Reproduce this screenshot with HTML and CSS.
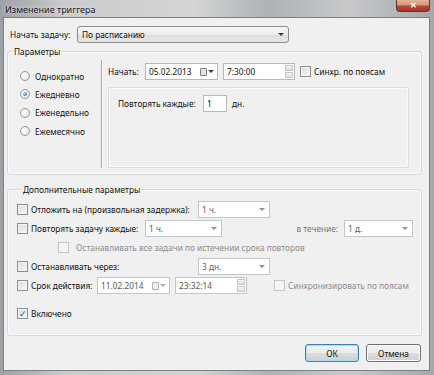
FILE: index.html
```html
<!DOCTYPE html>
<html lang="ru">
<head>
  <meta charset="UTF-8">
  <title>Изменение триггера</title>
  <link rel="stylesheet" href="styles.css">
</head>
<body>
  <div class="window">
    <div class="titlebar">
      <span class="title">Изменение триггера</span>
      <div class="close">✕</div>
    </div>

    <div class="dialog">
      <!-- начать задачу -->
      <div class="start-row">
        <span class="lbl-start">Начать задачу:</span>
        <div class="combo">По расписанию<span class="arrow"></span></div>
      </div>

      <!-- параметры -->
      <fieldset class="group params">
        <legend>Параметры</legend>
        <div class="radios">
          <div class="radio-row"><span class="radio"></span>Однократно</div>
          <div class="radio-row"><span class="radio checked"></span>Ежедневно</div>
          <div class="radio-row"><span class="radio"></span>Еженедельно</div>
          <div class="radio-row"><span class="radio"></span>Ежемесячно</div>
        </div>
        <div class="vsep"></div>
        <div class="schedule">
          <div class="field-row start-line">
            <span class="lbl-begin">Начать:</span>
            <div class="field date">05.02.2013<span class="cal"></span><span class="arrow"></span></div>
            <div class="field time">7:30:00<span class="spin"><i></i><i></i></span></div>
            <span class="check sync"></span><span>Синхр. по поясам</span>
          </div>
          <div class="inner">
            <div class="field-row">
              <span class="lbl-every">Повторять каждые:</span>
              <div class="field num">1</div>
              <span class="unit">дн.</span>
            </div>
          </div>
        </div>
      </fieldset>

      <!-- дополнительные параметры -->
      <fieldset class="group extra">
        <legend>Дополнительные параметры</legend>
        <div class="field-row">
          <span class="check"></span>
          <span class="lbl-long">Отложить на (произвольная задержка):</span>
          <div class="field drop w72">1 ч.<span class="arrow"></span></div>
        </div>
        <div class="field-row">
          <span class="check"></span>
          <span class="lbl-repeat">Повторять задачу каждые:</span>
          <div class="field drop w77">1 ч.<span class="arrow"></span></div>
          <span class="lbl-during">в течение:</span>
          <div class="field drop w69">1 д.<span class="arrow"></span></div>
        </div>
        <div class="field-row sub muted">
          <span class="check disabled"></span>
          <span>Останавливать все задачи по истечении срока повторов</span>
        </div>
        <div class="field-row">
          <span class="check"></span>
          <span class="lbl-long">Останавливать через:</span>
          <div class="field drop w72">3 дн.<span class="arrow"></span></div>
        </div>
        <div class="field-row">
          <span class="check"></span>
          <span class="lbl-expire">Срок действия:</span>
          <div class="field date off">11.02.2014<span class="cal"></span><span class="arrow"></span></div>
          <div class="field time off">23:32:14<span class="spin"><i></i><i></i></span></div>
          <span class="check disabled sync2"></span><span class="muted">Синхронизировать по поясам</span>
        </div>
        <div class="field-row enabled-row">
          <span class="check checked">✓</span>
          <span>Включено</span>
        </div>
      </fieldset>

      <div class="buttons">
        <button class="btn default">ОК</button>
        <button class="btn">Отмена</button>
      </div>
    </div>
  </div>
</body>
</html>
```

FILE: styles.css
```css
* {
  margin: 0;
  padding: 0;
  box-sizing: border-box;
}
body {
  font-family: 'Noto Sans', 'Open Sans', sans-serif;
  font-size: 8.3px;
  color: #111;
  background: #8e9297;
  white-space: nowrap;
}
.window {
  width: 434px;
  height: 375px;
  display: flex;
  flex-direction: column;
  background: linear-gradient(to right, #9da1a5, #c9cbcd 15%, #d3d5d6 45%, #aeb2b5 62%, #c7c9cb 80%, #a4a8ac);
}
.titlebar {
  height: 17px;
  display: flex;
  align-items: flex-start;
  padding-left: 5px;
}
.title {
  margin-top: 3px;
  font-size: 9px;
  color: #1e2024;
  text-shadow: 0 0 4px rgba(255,255,255,0.8);
}
.close {
  margin-left: auto;
  margin-right: 4px;
  width: 34px;
  height: 12px;
  border: 1px solid #6a3129;
  border-top: none;
  border-radius: 0 0 4px 4px;
  background: linear-gradient(#e2b595, #d2967a 45%, #b8463a 55%, #a8342a);
  color: #fff;
  font-size: 8px;
  font-weight: bold;
  text-align: center;
  line-height: 10px;
}
.dialog {
  flex: 1;
  margin: 0 4px 4px 3px;
  border: 1px solid #7b8085;
  background: #f0f0f0;
  padding: 8px 7px 0 3px;
  display: flex;
  flex-direction: column;
}

/* первая строка */
.start-row {
  display: flex;
  align-items: center;
  padding-left: 3px;
}
.lbl-start { width: 67px; }
.combo {
  width: 212px;
  height: 17px;
  border: 1px solid #8a8c8e;
  border-radius: 3px;
  background: linear-gradient(#f7f7f7, #ebebeb 50%, #dedede 51%, #e6e6e6);
  display: flex;
  align-items: center;
  padding-left: 4px;
}
.arrow {
  margin-left: auto;
  margin-right: 4px;
  width: 0;
  height: 0;
  border-left: 3px solid transparent;
  border-right: 3px solid transparent;
  border-top: 3px solid #3d3d3d;
}

/* группы */
.group {
  border: 1px solid #d5dadf;
  border-radius: 3px;
  box-shadow: inset 0 0 0 1px #fbfbfb;
}
.group legend {
  margin-left: 5px;
  padding: 0 1px;
}
.params {
  margin-top: 3px;
  display: flex;
  padding-bottom: 6px;
}
.radios {
  width: 93px;
  padding: 10px 0 0 12px;
}
.radio-row {
  height: 18.3px;
  display: flex;
  align-items: center;
}
.radio {
  width: 10px;
  height: 10px;
  border: 1px solid #9a9a9a;
  border-radius: 50%;
  background: radial-gradient(circle at 40% 40%, #ffffff, #dcdcdc);
  margin-right: 5px;
  display: flex;
  align-items: center;
  justify-content: center;
}
.radio.checked::after {
  content: '';
  width: 4px;
  height: 4px;
  border-radius: 50%;
  background: radial-gradient(circle at 35% 35%, #9fd0f5, #2b62a8);
}
.vsep {
  width: 2px;
  margin-top: 3px;
  border-left: 1px solid #a9a9a9;
  border-right: 1px solid #ffffff;
}
.schedule {
  flex: 1;
  padding: 6px 12px 0 5px;
}
.field-row {
  display: flex;
  align-items: center;
  height: 17px;
}
.lbl-begin { width: 37px; }
.field {
  height: 17px;
  border: 1px solid #b5b9be;
  background: #fff;
  display: flex;
  align-items: center;
  padding-left: 3px;
}
.date { width: 73px; }
.time { width: 72px; margin-left: 5px; }
.cal {
  margin-left: auto;
  width: 7px;
  height: 8px;
  border: 1px solid #7d7d7d;
  background: #e4e4e4;
  border-radius: 1px;
}
.date .arrow { margin: 0 3px 0 1px; }
.spin {
  margin-left: auto;
  width: 10px;
  height: 15px;
  display: flex;
  flex-direction: column;
  gap: 1px;
  padding: 1px;
}
.spin i {
  flex: 1;
  border: 1px solid #c6c9cc;
  background: linear-gradient(#f4f4f4, #dedede);
}
.check {
  width: 11px;
  height: 11px;
  border: 1px solid #8e8f8f;
  background: linear-gradient(135deg, #dcdcdc, #f8f8f8);
  box-shadow: inset 0 0 0 1px #f4f4f4;
  margin-right: 3px;
  display: flex;
  align-items: center;
  justify-content: center;
  font-size: 9px;
  color: #2b4a86;
}
.check.checked {
  background: linear-gradient(135deg, #cfdcea, #f4f7fb);
}
.check.disabled {
  border-color: #c6c6c6;
  background: #f5f5f5;
}
.sync { margin-left: 5px; }
.inner {
  margin-top: 7px;
  height: 81px;
  border: 1px solid #dcdcdc;
  border-radius: 2px;
  box-shadow: inset 0 0 0 1px #fafafa;
  padding: 7px 0 0 9px;
}
.lbl-every { width: 85px; }
.num { width: 24px; }
.unit { margin-left: 5px; }

/* дополнительные */
.extra {
  margin-top: 9px;
  padding: 6px 8px 13px 9px;
  display: flex;
  flex-direction: column;
  gap: 2px;
}
.extra .field { border-color: #c3c7cb; }
.drop { color: #5f5f5f; }
.drop .arrow { border-top-color: #909090; }
.w72 { width: 72px; }
.w77 { width: 77px; }
.w69 { width: 69px; }
.lbl-long { width: 167px; }
.lbl-repeat { width: 114px; }
.lbl-expire { width: 66px; }
.lbl-during {
  margin-left: auto;
  margin-right: 6px;
  color: #777;
}
.sub { padding-left: 41px; }
.muted { color: #8d8d8d; }
.sub span:last-child { margin-left: 4px; }
.off { color: #5a5a5a; }
.off .cal { border-color: #b0b0b0; background: #efefef; }
.off .arrow { border-top-color: #b0b0b0; }
.sync2 { margin-left: 27px; }
.enabled-row { margin-top: 9px; }

/* кнопки */
.buttons {
  display: flex;
  justify-content: flex-end;
  gap: 7px;
  margin-top: 8px;
  margin-right: 1px;
}
.btn {
  width: 55px;
  height: 18px;
  font-family: inherit;
  font-size: 8.3px;
  color: #111;
  border: 1px solid #707070;
  border-radius: 3px;
  background: linear-gradient(#f2f2f2, #ebebeb 50%, #dddddd 51%, #cfcfcf);
  box-shadow: inset 0 0 0 1px #fcfcfc;
}
.btn.default {
  width: 54px;
  border-color: #3c7fb1;
  box-shadow: inset 0 0 0 1px #a9dcf5;
}
```
